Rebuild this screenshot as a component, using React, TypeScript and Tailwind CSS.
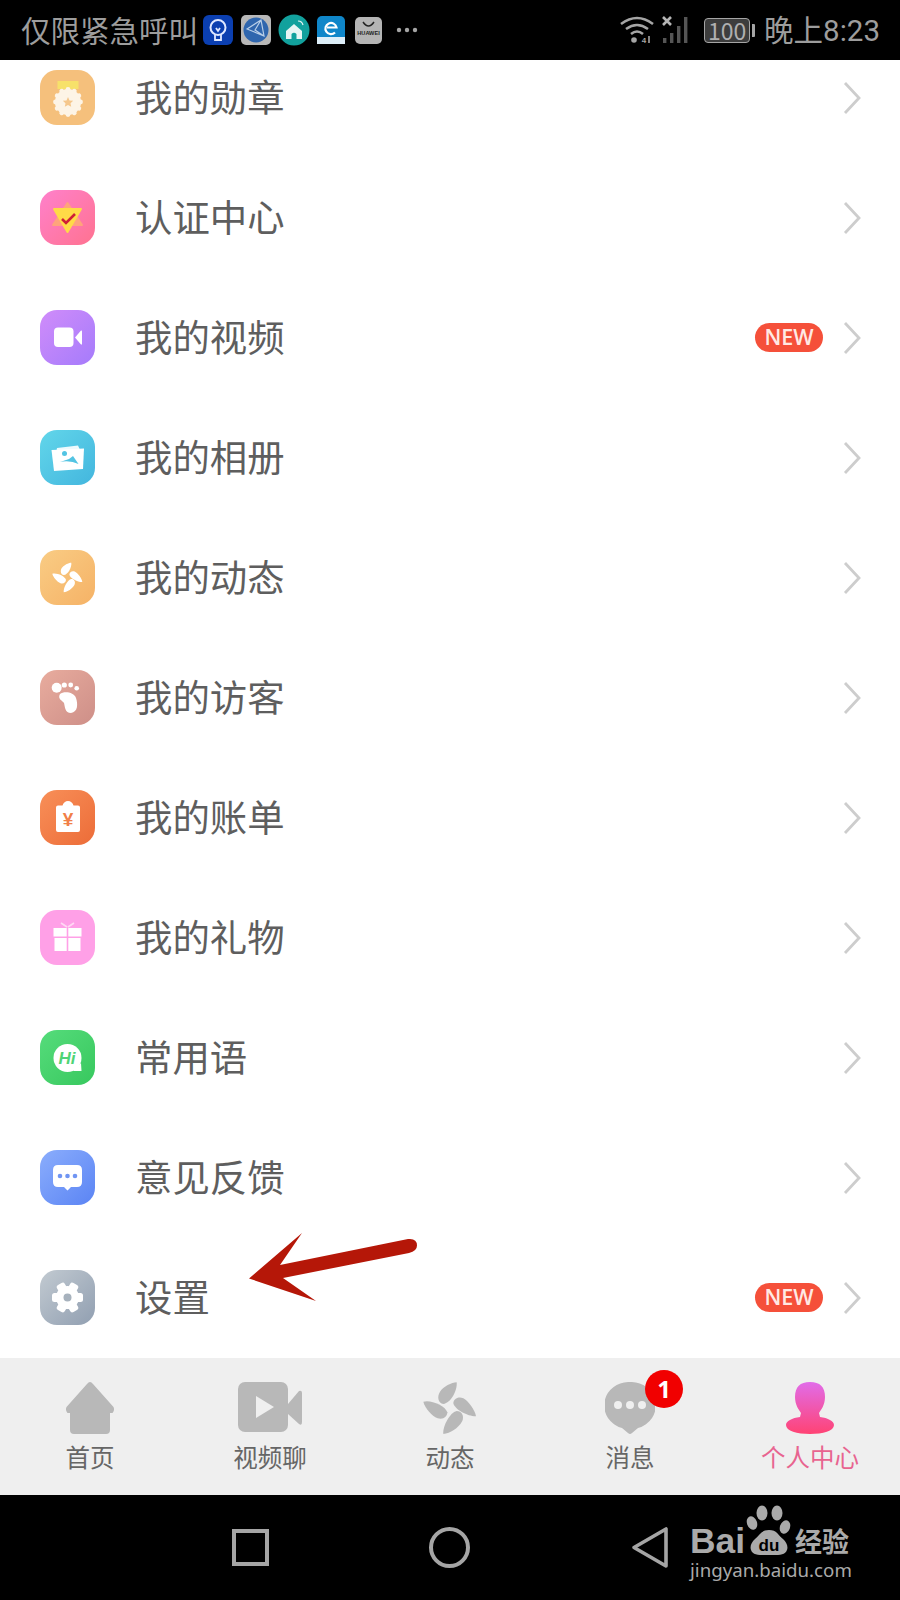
import React from "react";

const cjk = "font-['Noto_Sans_CJK_SC','Noto_Sans',sans-serif]";

function FanPetals({ fill }: { fill: string }) {
  return (
    <g fill={fill}>
      <path d="M125 22 C128 45 108 85 85 87 C70 85 65 65 75 50 C85 35 110 22 125 22 Z" />
      <path d="M183 124 C160 125 120 105 115 85 C115 72 130 63 145 70 C160 78 180 105 183 124 Z" />
      <path d="M85 177 C82 155 105 112 125 108 C140 108 148 122 142 138 C130 160 105 175 85 177 Z" />
      <path d="M25 80 C45 73 90 90 97 112 C97 125 85 135 68 130 C50 122 30 100 25 80 Z" />
    </g>
  );
}

function Fan() {
  return (
    <g transform="translate(27.5 27.5) scale(0.19) translate(-105 -100)">
      <FanPetals fill="#fff" />
    </g>
  );
}

const bumps = [0, 30, 60, 90, 120, 150, 180, 210, 240, 270, 300, 330];

function MedalIcon() {
  return (
    <>
      <rect x="17.5" y="11" width="21" height="8" fill="#f7e16a" />
      <circle cx="28" cy="32" r="13" fill="#fdf4e6" />
      {bumps.map((a) => (
        <circle key={a} cx="28" cy="19.5" r="2.4" fill="#fdf4e6" transform={`rotate(${a} 28 32)`} />
      ))}
      <polygon points="28,27 29.5,30.4 33.2,30.8 30.5,33.2 31.2,36.8 28,35 24.8,36.8 25.5,33.2 22.8,30.8 26.5,30.4" fill="#f5c78c" />
    </>
  );
}

function CertIcon() {
  return (
    <>
      <polygon points="27.5,13 42,35 13,35" fill="#ffa37c" stroke="#ffa37c" strokeWidth="2" strokeLinejoin="round" />
      <polygon points="14,19 41,19 27.5,42" fill="#ffdb47" stroke="#ffdb47" strokeWidth="2" strokeLinejoin="round" />
      <polyline points="22,29 26,33 35,24" fill="none" stroke="#cf1f36" strokeWidth="2.6" />
    </>
  );
}

function VideoIcon() {
  return (
    <>
      <rect x="14" y="17.5" width="19.5" height="19.5" rx="4" fill="#fff" />
      <path d="M35 27.5 L41 20.5 Q42 20 42 21.5 V33.5 Q42 35 41 34.5 Z" fill="#fff" />
    </>
  );
}

function PhotoIcon() {
  return (
    <>
      <polygon points="17,18 38,15.5 41,22 16,23" fill="#fff" opacity="0.9" />
      <polygon points="11.5,20 44,18.5 43,39 14,41" fill="#fff" />
      <circle cx="24.5" cy="23.5" r="2.5" fill="#53c4e3" />
      <path d="M20 32 L29 29 L33 26 L38.5 34 Q30 30 20 32 Z" fill="#53c4e3" />
    </>
  );
}

function FootIcon() {
  return (
    <g fill="#fff">
      <circle cx="16.7" cy="17.7" r="5" />
      <circle cx="24.3" cy="15" r="2.6" />
      <circle cx="30.7" cy="15" r="2.4" />
      <circle cx="36.7" cy="18.3" r="2.3" />
      <path d="M20 24 C24 21 34 22 36 28 C38 34 38 42 31 43 C25 43 25 37 24 33 C23 31 17 29 20 24 Z" />
    </g>
  );
}

function BillIcon() {
  return (
    <>
      <path d="M18 15.5 H22.5 Q24 11 28 11 Q32 11 33.5 15.5 H38 Q40 15.5 40 17.5 V40 Q40 42 38 42 H18 Q16 42 16 40 V17.5 Q16 15.5 18 15.5 Z" fill="#fff" />
      <text x="28" y="36" textAnchor="middle" fontSize="19" fontWeight="700" fill="#f17f49" fontFamily="'Liberation Sans',sans-serif">¥</text>
    </>
  );
}

function GiftIcon() {
  return (
    <g fill="#fff">
      <path d="M21 13 L27 17 M34 13 L28 17" stroke="#ffd9f4" strokeWidth="1.6" />
      <rect x="13.5" y="18" width="13.2" height="8.5" />
      <rect x="28.3" y="18" width="13.2" height="8.5" />
      <rect x="14.5" y="28" width="12.2" height="13" />
      <rect x="28.3" y="28" width="12.2" height="13" />
    </g>
  );
}

function HiIcon() {
  return (
    <>
      <circle cx="27.5" cy="28" r="14" fill="#fff" />
      <polygon points="41,33 41.5,41 33,41" fill="#fff" />
      <text x="27" y="34" textAnchor="middle" fontSize="17" fontWeight="700" fontStyle="italic" fill="#4fd476" fontFamily="'Liberation Sans',sans-serif">Hi</text>
    </>
  );
}

function ChatIcon() {
  return (
    <>
      <path d="M18 15 H37 Q42 15 42 20 V32 Q42 37 37 37 H31 L27.5 40.5 L24 37 H18 Q13 37 13 32 V20 Q13 15 18 15 Z" fill="#fff" />
      <circle cx="20" cy="26" r="2.3" fill="#7095f3" />
      <circle cx="27.5" cy="26" r="2.3" fill="#7095f3" />
      <circle cx="35" cy="26" r="2.3" fill="#7095f3" />
    </>
  );
}

function GearIcon() {
  return (
    <g>
      <circle cx="27.5" cy="27.5" r="11.5" fill="#fff" />
      {[0, 60, 120, 180, 240, 300].map((a) => (
        <rect key={a} x="23" y="12" width="9" height="8" rx="2.5" fill="#fff" transform={`rotate(${a + 30} 27.5 27.5)`} />
      ))}
      <circle cx="27.5" cy="27.5" r="4" fill="#a7b2bd" />
    </g>
  );
}

const rows: { label: string; bg: string; icon: React.ReactNode; isNew?: boolean }[] = [
  { label: "我的勋章", bg: "bg-[#f5c07c]", icon: <MedalIcon /> },
  { label: "认证中心", bg: "bg-linear-to-br from-[#ff80cb] to-[#ff7290]", icon: <CertIcon /> },
  { label: "我的视频", bg: "bg-linear-to-br from-[#d08cfa] to-[#a57bfb]", icon: <VideoIcon />, isNew: true },
  { label: "我的相册", bg: "bg-linear-to-br from-[#62d6ea] to-[#43b6de]", icon: <PhotoIcon /> },
  { label: "我的动态", bg: "bg-linear-to-br from-[#f9cc84] to-[#f5b266]", icon: <Fan /> },
  { label: "我的访客", bg: "bg-linear-to-br from-[#e8ac9e] to-[#ce8f88]", icon: <FootIcon /> },
  { label: "我的账单", bg: "bg-linear-to-br from-[#f88f58] to-[#ec6c38]", icon: <BillIcon /> },
  { label: "我的礼物", bg: "bg-[#ffa0e7]", icon: <GiftIcon /> },
  { label: "常用语", bg: "bg-linear-to-br from-[#55dc7b] to-[#37c85e]", icon: <HiIcon /> },
  { label: "意见反馈", bg: "bg-linear-to-br from-[#8badfc] to-[#5b84f4]", icon: <ChatIcon /> },
  { label: "设置", bg: "bg-linear-to-br from-[#c2cad1] to-[#919fb1]", icon: <GearIcon />, isNew: true },
];

function Chevron() {
  return (
    <svg width="18" height="36" viewBox="0 0 18 36" className="block">
      <polyline points="2,4 16,19 2,34" fill="none" stroke="#cdcdcd" strokeWidth="2.8" />
    </svg>
  );
}

function Row({ label, bg, icon, isNew }: (typeof rows)[number]) {
  return (
    <div className="flex h-[120px] shrink-0 items-center bg-white pl-10 pr-[39px]">
      <div className={`h-[55px] w-[55px] shrink-0 overflow-hidden rounded-[17px] ${bg}`}>
        <svg width="55" height="55" viewBox="0 0 55 55">{icon}</svg>
      </div>
      <span className="ml-10 flex-1 text-[37.4px] leading-none text-[#5e5e5e]">{label}</span>
      {isNew && (
        <span className="mr-5 flex h-[29px] w-[68px] items-center justify-center rounded-full bg-[#f5503a] font-['Open_Sans',sans-serif] text-[21.5px] font-semibold leading-none text-[#ffe9e4]">
          NEW
        </span>
      )}
      <Chevron />
    </div>
  );
}

function StatusBar() {
  return (
    <div className="flex h-[60px] shrink-0 items-center bg-black pl-[21px] pr-5 text-[#9d9d9d]">
      <span className="text-[29.5px] leading-none">仅限紧急呼叫</span>
      <div className="ml-[5px] flex items-center">
        <svg width="30" height="30" viewBox="0 0 30 30">
          <rect width="30" height="30" rx="6" fill="#0b3fb1" />
          <circle cx="15" cy="12.5" r="7.5" fill="none" stroke="#dfe8ff" strokeWidth="2" />
          <path d="M12 20 V25 H18 V20 M13 13 L15 16 L17 13" fill="none" stroke="#dfe8ff" strokeWidth="1.8" />
        </svg>
        <svg width="30" height="30" viewBox="0 0 30 30" className="ml-2">
          <rect width="30" height="30" rx="5" fill="#b8b8b8" />
          <circle cx="15" cy="15" r="12.5" fill="#2f66ae" />
          <path d="M6 14 L20 5 L23 21 Z M20 5 L14 15 L23 21" fill="none" stroke="#b9cfe8" strokeWidth="1.2" />
        </svg>
        <svg width="32" height="32" viewBox="0 0 32 32" className="ml-[7px]">
          <circle cx="16" cy="16" r="15.5" fill="#12a19d" />
          <path d="M8 17 L16 10 L24 17 V25 H8 Z" fill="#e7f5f4" />
          <path d="M13.5 25 V20 Q16 17.5 18.5 20 V25 Z" fill="#12a19d" />
          <path d="M20 7 Q24 7 25 11" fill="none" stroke="#e7f5f4" strokeWidth="1.2" />
        </svg>
        <svg width="28" height="28" viewBox="0 0 28 28" className="ml-[7px]">
          <rect width="28" height="28" rx="5" fill="#0f86c9" />
          <rect y="21" width="28" height="7" fill="#ddeef8" />
          <path d="M10 11.5 H19.5 A5.6 5.6 0 1 0 18 16.5" fill="none" stroke="#fff" strokeWidth="2.2" />
        </svg>
        <svg width="27" height="27" viewBox="0 0 27 27" className="ml-[10px]">
          <rect width="27" height="27" rx="5" fill="#b4b4b4" />
          <path d="M8 5 Q13.5 13 19 5" fill="none" stroke="#222" strokeWidth="1.4" />
          <text x="13.5" y="17.5" textAnchor="middle" fontSize="5.6" fontWeight="700" fill="#222" fontFamily="'Liberation Sans',sans-serif">HUAWEI</text>
        </svg>
        <svg width="22" height="6" viewBox="0 0 22 6" className="ml-[14px]">
          <circle cx="3" cy="3" r="2.2" fill="#a5a5a5" />
          <circle cx="11" cy="3" r="2.2" fill="#a5a5a5" />
          <circle cx="19" cy="3" r="2.2" fill="#a5a5a5" />
        </svg>
      </div>
      <div className="ml-auto flex items-center">
        <svg width="34" height="28" viewBox="0 0 34 28">
          <path d="M1 8 Q17 -4 33 8 M6 13 Q17 5 28 13 M11 18 Q17 13 23 18" fill="none" stroke="#a5a5a5" strokeWidth="2.6" />
          <circle cx="14" cy="24" r="2.8" fill="#a5a5a5" />
          <text x="24" y="27" textAnchor="middle" fontSize="8" fontWeight="700" fill="#a5a5a5" fontFamily="'Liberation Sans',sans-serif">4</text>
          <path d="M29 20 V27" stroke="#a5a5a5" strokeWidth="1.6" />
        </svg>
        <svg width="30" height="28" viewBox="0 0 30 28" className="ml-[8px]">
          <path d="M1 1 L9 9 M9 1 L1 9" stroke="#b5b5b5" strokeWidth="2.6" />
          <rect x="1" y="22" width="3.4" height="5" fill="#555" />
          <rect x="8" y="17" width="3.4" height="10" fill="#555" />
          <rect x="15" y="10" width="3.4" height="17" fill="#555" />
          <rect x="22" y="1" width="3.4" height="26" fill="#555" />
        </svg>
        <div className="ml-[12px] flex items-center">
          <div className="relative flex h-[25px] w-[46px] items-center justify-center rounded-[4px] border border-[#a5a5a5] bg-[#3d3d3d] text-[23px] leading-none text-[#b0b0b0]">
            100
          </div>
          <div className="ml-[2px] h-[13px] w-[3px] rounded-r-[1px] bg-[#a5a5a5]" />
        </div>
        <span className="ml-[9px] text-[29.5px] leading-none text-[#9d9d9d]">
          晚上<span className="font-['Roboto',sans-serif]">8:23</span>
        </span>
      </div>
    </div>
  );
}

function Tab({ label, active, children }: { label: string; active?: boolean; children: React.ReactNode }) {
  return (
    <div className="flex flex-col items-center pt-6">
      <div className="relative h-[53px]">{children}</div>
      <span className={`mt-[7px] text-[24.5px] leading-[30px] ${active ? "text-[#e8648f]" : "text-[#666666]"}`}>{label}</span>
    </div>
  );
}

function TabBar() {
  return (
    <div className="grid h-[137px] shrink-0 grid-cols-5 bg-[#efefef]">
      <Tab label="首页">
        <svg width="50" height="53" viewBox="0 0 50 53">
          <path d="M25 0 Q26.5 0 28 2 L48.5 25 Q50 28 47.5 31 H45 V48 Q45 52 41 52 H9 Q5 52 5 48 V31 H2.5 Q0 28 1.5 25 L22 2 Q23.5 0 25 0 Z" fill="#b8b8b8" />
        </svg>
      </Tab>
      <Tab label="视频聊">
        <svg width="64" height="53" viewBox="0 0 64 53">
          <rect x="0" y="0" width="50" height="50" rx="7" fill="#b8b8b8" />
          <polygon points="18,14 36,25 18,36" fill="#efefef" />
          <path d="M50 22 L61 9 Q64 8 64 11 V40 Q64 44 61 42 L50 32 Z" fill="#b8b8b8" />
        </svg>
      </Tab>
      <Tab label="动态">
        <svg width="70" height="65" viewBox="0 0 210 195" className="-mt-[7px]">
          <FanPetals fill="#b8b8b8" />
        </svg>
      </Tab>
      <Tab label="消息">
        <svg width="50" height="53" viewBox="0 0 50 53">
          <path d="M25 0 A25 23.5 0 0 1 33 46 L27 51 Q25 53 23 51 L17 46 A25 23.5 0 0 1 25 0 Z" fill="#b8b8b8" />
          <circle cx="13" cy="23" r="4" fill="#efefef" />
          <circle cx="25" cy="23" r="4" fill="#efefef" />
          <circle cx="37" cy="23" r="4" fill="#efefef" />
        </svg>
        <span className="absolute left-[40px] top-[-12px] flex h-[38px] w-[38px] items-center justify-center rounded-full bg-[#f10000] font-['Open_Sans',sans-serif] text-[24px] font-bold leading-none text-white">
          1
        </span>
      </Tab>
      <Tab label="个人中心" active>
        <svg width="48" height="53" viewBox="0 0 48 53">
          <defs>
            <linearGradient id="person" x1="0" y1="0" x2="0" y2="1">
              <stop offset="0" stopColor="#e16ce9" />
              <stop offset="1" stopColor="#ff4374" />
            </linearGradient>
          </defs>
          <path d="M24 0 C34 0 39 5 39 15 C39 23 35 28 33 31 L34 35 C42 36 48 39 48 43 C48 49 37 52 24 52 C11 52 0 49 0 43 C0 39 6 36 14 35 L15 31 C13 28 9 23 9 15 C9 5 14 0 24 0 Z" fill="url(#person)" />
        </svg>
      </Tab>
    </div>
  );
}

function NavBar() {
  return (
    <div className="relative flex h-[105px] shrink-0 items-center bg-black">
      <div className="ml-[232px] h-[37px] w-[37px] border-[4px] border-[#a5a5a5]" />
      <div className="ml-[160px] h-[41px] w-[41px] rounded-full border-[4px] border-[#a5a5a5]" />
      <svg width="38" height="44" viewBox="0 0 38 44" className="ml-[161px]">
        <path d="M35 3 V40 L3 21.5 Z" fill="none" stroke="#a5a5a5" strokeWidth="3.6" strokeLinejoin="round" />
      </svg>
      <div className="absolute left-[690px] top-[9px] h-[90px] w-[165px] text-[#aaaaaa]">
        <svg width="165" height="90" viewBox="0 0 165 90" className="absolute left-0 top-0">
          <text x="0" y="49" fontSize="35" fontWeight="700" fill="#aaaaaa" textLength="55" lengthAdjust="spacingAndGlyphs" fontFamily="'Liberation Sans',sans-serif">Bai</text>
          <g fill="#aaaaaa">
            <ellipse cx="62" cy="19" rx="5" ry="7" transform="rotate(-20 62 19)" />
            <ellipse cx="72" cy="9" rx="5.5" ry="7.5" />
            <ellipse cx="87" cy="9" rx="5.5" ry="7.5" />
            <ellipse cx="95" cy="23" rx="5" ry="7" transform="rotate(20 95 23)" />
            <path d="M79 26 C87 26 88 31 93 35 C100 41 99 51 88 51 H70 C59 51 58 41 65 35 C70 31 71 26 79 26 Z" />
          </g>
          <text x="79" y="47" textAnchor="middle" fontSize="17" fontWeight="700" fill="#000" fontFamily="'Liberation Sans',sans-serif">du</text>
        </svg>
        <span className="absolute left-[105px] top-[23px] text-[27px] font-bold leading-none">经验</span>
        <span className="absolute left-0 top-[57px] whitespace-nowrap font-['Noto_Sans',sans-serif] text-[18.7px] leading-none">jingyan.baidu.com</span>
      </div>
    </div>
  );
}

export default function App() {
  return (
    <div className={`relative flex h-[1600px] w-[900px] flex-col overflow-hidden bg-white ${cjk}`}>
      <StatusBar />
      <div className="flex h-[1298px] shrink-0 flex-col overflow-hidden">
        <div className="-mt-[23px] flex flex-col">
          {rows.map((r) => (
            <Row key={r.label} {...r} />
          ))}
        </div>
      </div>
      <TabBar />
      <NavBar />
      <svg width="200" height="100" viewBox="230 1220 200 100" className="absolute left-[230px] top-[1220px]">
        <path d="M249 1278.5 L302 1233 L280 1265 L408 1239 Q417 1238 417 1245.5 Q417 1251 409 1253 L283 1278 L316 1301 Z" fill="#b51708" />
      </svg>
    </div>
  );
}
